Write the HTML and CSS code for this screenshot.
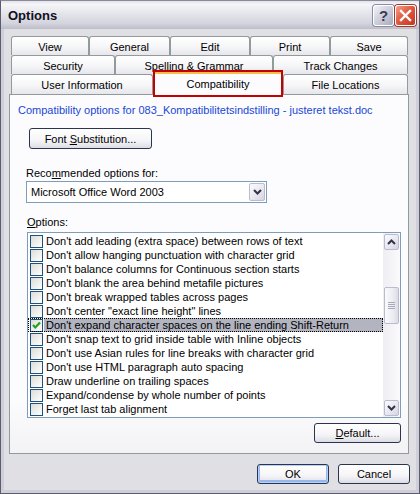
FILE: index.html
```html
<!DOCTYPE html>
<html>
<head>
<meta charset="utf-8">
<title>Options</title>
<link rel="stylesheet" href="styles.css">
</head>
<body>
<div class="window">
  <div class="titlebar">
    <span class="title">Options</span>
    <div class="caption-btns">
      <span class="cbtn help">?</span>
      <span class="cbtn close"><svg width="13" height="13" viewBox="0 0 13 13"><path d="M2 2L11 11M11 2L2 11" stroke="#fff" stroke-width="2.4" stroke-linecap="square" fill="none"/></svg></span>
    </div>
  </div>
  <div class="client">
    <div class="tabs">
      <div class="tabrow">
        <div class="tab t-view">View</div>
        <div class="tab t-general">General</div>
        <div class="tab t-edit">Edit</div>
        <div class="tab t-print">Print</div>
        <div class="tab t-save">Save</div>
      </div>
      <div class="tabrow">
        <div class="tab t-security">Security</div>
        <div class="tab t-spelling">Spelling &amp; Grammar</div>
        <div class="tab t-track">Track Changes</div>
      </div>
      <div class="tabrow last">
        <div class="tab t-user">User Information</div>
        <div class="tab t-compat selected">Compatibility</div>
        <div class="tab t-files">File Locations</div>
      </div>
    </div>
    <div class="panel">
      <div class="doc-title">Compatibility options for 083_Kompatibilitetsindstilling - justeret tekst.doc</div>
      <div class="btn btn-font"><span>Font <u>S</u>ubstitution...</span></div>
      <div class="label lbl-rec">Reco<u>m</u>mended options for:</div>
      <div class="select">
        <span class="select-text">Microsoft Office Word 2003</span>
        <span class="drop-btn"><svg width="9" height="6" viewBox="0 0 9 6"><path d="M1 1L4.5 4.5L8 1" stroke="#33334a" stroke-width="2" fill="none"/></svg></span>
      </div>
      <div class="label lbl-opt"><u>O</u>ptions:</div>
      <div class="listbox">
        <div class="rows">
          <div class="row"><span class="cb"></span><span class="rtext">Don't add leading (extra space) between rows of text</span></div>
          <div class="row"><span class="cb"></span><span class="rtext">Don't allow hanging punctuation with character grid</span></div>
          <div class="row"><span class="cb"></span><span class="rtext">Don't balance columns for Continuous section starts</span></div>
          <div class="row"><span class="cb"></span><span class="rtext">Don't blank the area behind metafile pictures</span></div>
          <div class="row"><span class="cb"></span><span class="rtext">Don't break wrapped tables across pages</span></div>
          <div class="row"><span class="cb"></span><span class="rtext">Don't center "exact line height" lines</span></div>
          <div class="row focused"><span class="cb"><svg width="11" height="11" viewBox="0 0 11 11"><path d="M2 5L4.3 7.5L9 2.5" stroke="#21a121" stroke-width="2.2" fill="none"/></svg></span><span class="rtext sel">Don't expand character spaces on the line ending Shift-Return</span></div>
          <div class="row"><span class="cb"></span><span class="rtext">Don't snap text to grid inside table with Inline objects</span></div>
          <div class="row"><span class="cb"></span><span class="rtext">Don't use Asian rules for line breaks with character grid</span></div>
          <div class="row"><span class="cb"></span><span class="rtext">Don't use HTML paragraph auto spacing</span></div>
          <div class="row"><span class="cb"></span><span class="rtext">Draw underline on trailing spaces</span></div>
          <div class="row"><span class="cb"></span><span class="rtext">Expand/condense by whole number of points</span></div>
          <div class="row"><span class="cb"></span><span class="rtext">Forget last tab alignment</span></div>
        </div>
        <div class="vscroll">
          <span class="sbtn"><svg width="9" height="6" viewBox="0 0 9 6"><path d="M1 5L4.5 1.5L8 5" stroke="#33334a" stroke-width="2" fill="none"/></svg></span>
          <span class="thumb"><span class="grip"></span></span>
          <span class="sbtn down"><svg width="9" height="6" viewBox="0 0 9 6"><path d="M1 1L4.5 4.5L8 1" stroke="#33334a" stroke-width="2" fill="none"/></svg></span>
        </div>
      </div>
      <div class="btn btn-default"><span><u>D</u>efault...</span></div>
    </div>
    <div class="footer">
      <div class="btn btn-ok"><span>OK</span></div>
      <div class="btn btn-cancel"><span>Cancel</span></div>
    </div>
  </div>
</div>
</body>
</html>
```
FILE: styles.css
```css
* { box-sizing: border-box; }
html, body { margin: 0; padding: 0; }
body {
  width: 420px; height: 494px; overflow: hidden;
  font-family: "Liberation Sans", Arial, sans-serif;
  font-size: 11px; color: #000; background: #fff;
}
.window {
  width: 420px; height: 494px;
  border: 1px solid #5c5c6e; border-top-color: #8a8a9c;
  background: #e0dfe3;
  display: flex; flex-direction: column;
}
.titlebar {
  height: 28px; flex: none;
  display: flex; align-items: center; justify-content: space-between;
  padding: 0 3px 0 7px;
  background: linear-gradient(#e2e2ea 0%, #f6f6f9 12%, #e4e4eb 45%, #d4d4de 80%, #bdbdca 100%);
}
.title { font-weight: bold; font-size: 13px; color: #101020; }
.caption-btns { display: flex; gap: 1px; }
.cbtn {
  width: 21px; height: 21px; border: 1px solid #fff; border-radius: 3px;
  display: flex; align-items: center; justify-content: center;
}
.help {
  background: linear-gradient(135deg, #f2f2f7, #c6c6d6 60%, #a9a9c0);
  color: #3a3a52; font-weight: bold; font-size: 15px;
  box-shadow: 0 0 0 1px #8c8ca4;
}
.close {
  background: linear-gradient(135deg, #f3a18d, #e05a40 45%, #c4361f);
  box-shadow: 0 0 0 1px #a03a2a;
}
.client {
  flex: 1;
  border: 3px solid #cfcfda; border-top: 0;
  padding: 7px 6px 0 5px;
  display: flex; flex-direction: column;
}
.tabs { margin-left: 2px; width: 397px; }
.tabrow { display: flex; height: 19px; align-items: flex-start; }
.tabrow.last { height: 20px; }
.tab {
  height: 100%;
  border: 1px solid #919b9c; border-bottom: 0;
  border-radius: 3px 3px 0 0;
  background: linear-gradient(#ffffff, #f6f6f8 55%, #e6e6ec);
  display: flex; align-items: center; justify-content: center;
  padding-top: 1px;
  white-space: nowrap;
}
.t-view { width: 78px; } .t-general { width: 81px; } .t-edit { width: 80px; }
.t-print { width: 80px; } .t-save { width: 78px; }
.t-security { width: 104px; } .t-spelling { width: 158px; } .t-track { width: 135px; }
.t-user { width: 142px; } .t-compat { width: 130px; } .t-files { width: 125px; }
.tab.selected {
  position: relative; z-index: 2;
  height: 27px; margin-top: -4px;
  border: 2px solid #c40000; border-radius: 0;
  background: #fcfcfe;
  box-shadow: inset 0 2px 0 #f8c04a;
  padding-top: 0;
}
.panel {
  width: 400px; height: 360px; flex: none;
  border: 1px solid #919b9c;
  background: linear-gradient(#fcfcfe 0%, #fcfcfe 85%, #f3f3f5 100%);
  padding: 9px 7px 0 8px;
  display: flex; flex-direction: column; align-items: flex-start;
}
.doc-title { color: #1947d4; line-height: 13px; white-space: nowrap; }
.btn {
  display: flex; align-items: center; justify-content: center;
  border: 1px solid #2a3552; border-radius: 3px;
  background: linear-gradient(#ffffff, #f5f5f8 60%, #dcdce4);
  white-space: nowrap;
}
.btn-font { margin: 11px 0 0 11px; width: 123px; height: 21px; }
.label { line-height: 13px; white-space: nowrap; }
.lbl-rec { margin: 18px 0 0 8px; }
.select {
  margin: 1px 0 0 8px; width: 241px; height: 22px;
  border: 1px solid #7f9db9; background: #fff;
  display: flex; align-items: center; padding: 1px;
}
.select-text { flex: 1; padding-left: 3px; }
.drop-btn, .sbtn {
  border: 1px solid #b9bccf; border-radius: 2px;
  background: linear-gradient(135deg, #fbfbfd, #e6e6ef 60%, #d4d4e0);
  display: flex; align-items: center; justify-content: center;
}
.drop-btn { width: 16px; height: 18px; }
.lbl-opt { margin: 13px 0 0 9px; }
.listbox {
  margin: 3px 0 0 9px; width: 374px; height: 186px;
  border: 1px solid #7f9db9; background: #fff;
  display: flex;
}
.rows { flex: 1; padding-top: 1px; display: flex; flex-direction: column; }
.row { height: 14px; display: flex; align-items: center; padding-left: 2px; }
.cb {
  width: 13px; height: 13px; flex: none;
  border: 1px solid #1c5180;
  background: linear-gradient(135deg, #dcdcd7, #ffffff);
  display: flex; align-items: center; justify-content: center;
}
.rtext { margin-left: 2px; padding-left: 1px; white-space: nowrap; line-height: 14px; }
.row.focused { outline: 1px dotted #000; outline-offset: -1px; }
.rtext.sel { flex: 1; background: #b2b4bf; margin-left: 1px; padding-left: 2px; }
.vscroll {
  width: 17px; flex: none;
  background: linear-gradient(90deg, #eeeef3, #fafafc);
  display: flex; flex-direction: column; align-items: center;
  padding: 1px 0;
}
.sbtn { width: 15px; height: 16px; }
.sbtn.down { margin-top: auto; }
.thumb {
  width: 15px; height: 37px; margin-top: 37px;
  border: 1px solid #b9bccf; border-radius: 2px;
  background: linear-gradient(90deg, #fbfbfd, #ececf2 60%, #dcdce6);
  display: flex; align-items: center; justify-content: center;
}
.grip {
  width: 7px; height: 7px;
  background: repeating-linear-gradient(#a7a9bd 0 1px, transparent 1px 2px);
}
.btn-default { align-self: flex-end; margin-top: 5px; width: 87px; height: 20px; }
.footer {
  display: flex; justify-content: flex-end; gap: 9px;
  margin-top: 10px;
}
.btn-ok, .btn-cancel { width: 72px; height: 20px; }
.btn-ok { box-shadow: inset 0 0 0 1px #b8d0f6, inset 0 -1px 0 2px #97b8ec; }
```
